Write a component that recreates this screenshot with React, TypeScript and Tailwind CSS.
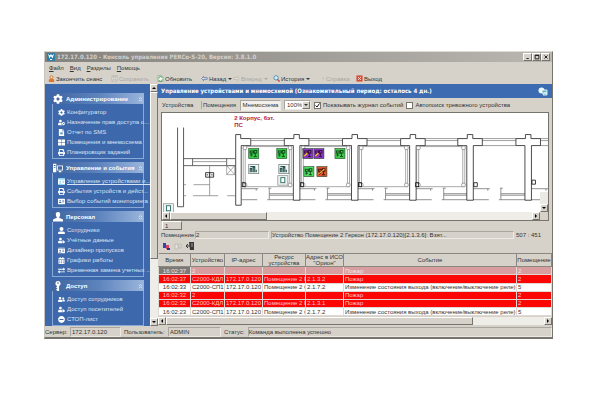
import { useState } from "react";
import type { ReactNode } from "react";
import {
  FaAddressCard,
  FaCalendarAlt,
  FaCog,
  FaExchangeAlt,
  FaFileAlt,
  FaIdCard,
  FaMinusCircle,
  FaPrint,
  FaThLarge,
  FaUserAlt,
  FaUserCog,
  FaUserFriends,
  FaUserTag,
} from "react-icons/fa";

const raised = "border border-t-white border-l-white border-r-[#77746e] border-b-[#77746e] bg-[#d6d2ca]";
const sunken = "border border-t-[#aaa69f] border-l-[#aaa69f] border-r-[#eceae5] border-b-[#eceae5]";

type IconProps = { className?: string };

function ConsoleIcon({ className }: IconProps) {
  return (
    <svg viewBox="0 0 12 12" className={className} fill="currentColor">
      <path fillRule="evenodd" d="M0 1h4v10H0zM1 2.5v1h2v-1zM1 5v1h2V5zM5 3h7v6H5zM6 4v4h5V4zM7 9.5h3v1.5H7z" />
    </svg>
  );
}

function PersonIcon({ className }: IconProps) {
  return (
    <svg viewBox="0 0 12 12" className={className} fill="currentColor">
      <path d="M6 0c2 0 2.8 1.4 2.6 3.2C8.5 4.6 8 5.5 7.4 6v1L12 9v2.5H0V9l4.6-2V6C4 5.5 3.5 4.6 3.4 3.2 3.2 1.4 4 0 6 0z" />
    </svg>
  );
}

function KeyIcon({ className }: IconProps) {
  return (
    <svg viewBox="0 0 12 12" className={className} fill="currentColor">
      <path fillRule="evenodd" d="M6 0a3.2 3.2 0 0 1 1.3 6.1V12H5v-1H4V9.5h1v-1H4V7.3h.7V6.1A3.2 3.2 0 0 1 6 0zM6 1.5a1 1 0 0 0 0 2 1 1 0 0 0 0-2z" />
    </svg>
  );
}

const groups = [
  {
    title: "Администрирование",
    icon: FaCog,
    items: [
      { icon: FaCog, label: "Конфигуратор" },
      { icon: FaUserCog, label: "Назначение прав доступа о..." },
      { icon: FaFileAlt, label: "Отчет по SMS" },
      { icon: FaThLarge, label: "Помещения и мнемосхема" },
      { icon: FaPrint, label: "Планировщик заданий" },
    ],
  },
  {
    title: "Управление и события",
    icon: ConsoleIcon,
    items: [
      { icon: FaIdCard, label: "Управление устройствами и...", active: true },
      { icon: FaPrint, label: "События устройств и дейст..." },
      { icon: FaAddressCard, label: "Выбор событий мониторинга" },
    ],
  },
  {
    title: "Персонал",
    icon: PersonIcon,
    items: [
      { icon: FaUserAlt, label: "Сотрудники" },
      { icon: FaUserTag, label: "Учётные данные" },
      { icon: FaIdCard, label: "Дизайнер пропусков" },
      { icon: FaCalendarAlt, label: "Графики работы" },
      { icon: FaExchangeAlt, label: "Временная замена учетных ..." },
    ],
  },
  {
    title: "Доступ",
    icon: KeyIcon,
    items: [
      { icon: FaUserFriends, label: "Доступ сотрудников" },
      { icon: FaUserTag, label: "Доступ посетителей" },
      { icon: FaMinusCircle, label: "СТОП-лист" },
    ],
  },
];

const rows = [
  { tone: "selected", cells: ["16:02:37", "2", "", "", "", "Пожар", "2"] },
  { tone: "alarm", cells: ["16:02:37", "С2000-КДЛ", "172.17.0.120", "Помещение 2 П", "2.1.3.2", "Пожар", "2"] },
  { tone: "plain", cells: ["16:02:33", "С2000-СП1", "172.17.0.120", "Помещение 2 С", "2.1.7.2", "Изменение состояния выхода (включение/выключение реле)", "5"] },
  { tone: "alarm", cells: ["16:02:32", "2", "", "", "", "Пожар", "2"] },
  { tone: "alarm", cells: ["16:02:32", "С2000-КДЛ", "172.17.0.120", "Помещение 2 П", "2.1.3.1", "Пожар", "2"] },
  { tone: "plain", cells: ["16:02:23", "С2000-СП1", "172.17.0.120", "Помещение 2 С", "2.1.7.2", "Изменение состояния выхода (включение/выключение реле)", "5"] },
];

const tones: Record<string, string> = {
  selected: "bg-[#d79d9f] text-[#f8e4e4]",
  alarm: "bg-[#fb0505] text-[#ffc4c4]",
  plain: "bg-white text-[#333]",
};

function Arrow({ dir }: { dir: "up" | "down" | "left" | "right" }) {
  const d = { up: "M1 4h4L3 2z", down: "M1 2h4L3 4z", left: "M4 1v4L2 3z", right: "M2 1v4l2-2z" }[dir];
  return (
    <svg viewBox="0 0 6 6" className="h-1.5 w-1.5 shrink-0">
      <path d={d} fill="currentColor" />
    </svg>
  );
}

function ScrollButton({ dir, label }: { dir: "up" | "down" | "left" | "right"; label: string }) {
  return (
    <button type="button" aria-label={label} className={`flex h-2 w-2 shrink-0 items-center justify-center text-black ${raised}`}>
      <Arrow dir={dir} />
    </button>
  );
}

function ToolButton({ icon, label, muted, menu }: { icon: ReactNode; label: string; muted?: boolean; menu?: boolean }) {
  return (
    <button type="button" className={`flex items-center gap-px whitespace-nowrap ${muted ? "text-[#aaa69f]" : "text-[#333]"}`}>
      <svg viewBox="0 0 8 8" className="h-[7px] w-[7px] shrink-0">
        {icon}
      </svg>
      {label}
      {menu ? <Arrow dir="down" /> : null}
    </button>
  );
}

function TitleBar() {
  return (
    <header className="flex h-[10px] items-center gap-0.5 bg-linear-to-r from-[#85837f] to-[#bab7b0] px-0.5 text-[#d3d1cc]">
      <svg viewBox="0 0 8 8" className="h-2 w-2">
        <rect width="8" height="8" fill="#2d7fa8" />
        <path d="M1 1l1.5 4.5L4 3l1.5 2.5L7 1 5 2.5 4 1 3 2.5zM3 6h2v1H3z" fill="#fff" />
      </svg>
      <h1 className="grow font-['DejaVu_Sans_Condensed','DejaVu_Sans',sans-serif] font-bold">
        172.17.0.120 - Консоль управления PERCo-S-20, Версия: 3.8.1.0
      </h1>
      <div className="flex">
        {[
          { label: "Свернуть", d: "M2 6h3" },
          { label: "Развернуть", d: "M1.5 1.5h5v5h-5zM1.5 2h5" },
          { label: "Закрыть", d: "M2 2l4 4M6 2L2 6" },
        ].map((b) => (
          <button key={b.label} type="button" aria-label={b.label} className={`h-2 w-[9px] ${raised}`}>
            <svg viewBox="0 0 8 8" className="mx-auto h-1.5 w-1.5">
              <path d={b.d} fill="none" stroke="#222" strokeWidth="1.3" />
            </svg>
          </button>
        ))}
      </div>
    </header>
  );
}

function Toolbar() {
  return (
    <div className="grid h-[11px] grid-cols-[63px_46px_44px_32px_40px_45px_38px_30px] items-center pl-[3px]">
      <ToolButton
        label="Закончить сеанс"
        icon={<><circle cx="4" cy="2.5" r="1.8" fill="#f2dcae" stroke="#c5672c" strokeWidth=".8" /><path d="M1 8V5l3-1 3 1v3z" fill="#df762f" /></>}
      />
      <ToolButton muted label="Сохранить" icon={<path d="M1 1h6v6H1zM2.5 1v2h3V1M2.5 7V5h3v2" fill="#e5e2dd" stroke="#b5b1aa" strokeWidth=".8" />} />
      <ToolButton
        label="Обновить"
        icon={<><path d="M1 .5h4l2 2v5H1z" fill="#f6f8f4" stroke="#7b8b7b" strokeWidth=".6" /><path d="M2 4a2 2 0 0 1 4-.5M6 5a2 2 0 0 1-4 .5" fill="none" stroke="#219d3e" strokeWidth="1" /></>}
      />
      <ToolButton menu label="Назад" icon={<path d="M7 3H3V1.5L.8 4 3 6.5V5h4z" fill="#dfe8f5" stroke="#45618b" strokeWidth=".7" />} />
      <ToolButton muted menu label="Вперед" icon={<path d="M1 3h4V1.5L7.2 4 5 6.5V5H1z" fill="#e5e2dd" stroke="#b5b1aa" strokeWidth=".7" />} />
      <ToolButton
        menu
        label="История"
        icon={<><circle cx="3.5" cy="3.2" r="2.5" fill="#d5edf8" stroke="#4d87a7" /><path d="M5 5l2.5 2.5" stroke="#cb3f34" strokeWidth="1.5" /></>}
      />
      <ToolButton muted label="Справка" icon={<path d="M5 4h2M6 3v2" stroke="#bdb9b2" strokeWidth=".7" />} />
      <ToolButton label="Выход" icon={<><rect x=".5" y=".5" width="7" height="7" fill="#d84b32" /><path d="M2.5 2.5l3 3M5.5 2.5l-3 3" stroke="#fff" /></>} />
    </div>
  );
}

function Sidebar() {
  return (
    <aside className="flex w-[113px] shrink-0 overflow-hidden">
      <nav className="flex grow flex-col gap-[3px] overflow-hidden bg-[#3d68ab] pt-[9px] pr-1.5 pl-[7px] text-[#d7e4f5]">
        {groups.map(({ title, icon: Icon, items }) => (
          <section key={title}>
            <button type="button" className="flex h-[11px] w-full items-center gap-[3px] bg-linear-to-r from-[#41669f] via-[#5d83bd] to-[#9bb6dc] px-px font-bold text-white">
              <Icon className="h-[10px] w-[10px] shrink-0" />
              <span className="grow text-left whitespace-nowrap">{title}</span>
              <svg viewBox="0 0 6 8" className="h-1.5 w-[5px]">
                <path d="M1 4l2-2 2 2M1 7l2-2 2 2" fill="none" stroke="#e7effa" />
              </svg>
            </button>
            <ul className="border border-t-0 border-[#89a9d6] pt-[3px] pb-px pl-[5px]">
              {items.map((item) => (
                <li key={item.label} className="h-[10px]">
                  <a href="#" className="flex h-full items-center gap-0.5 whitespace-nowrap">
                    <item.icon className={`h-[7px] w-[7px] shrink-0 text-white ${"active" in item ? "bg-[#6fc3ea]" : ""}`} />
                    <span className={"active" in item ? "underline" : ""}>{item.label}</span>
                  </a>
                </li>
              ))}
            </ul>
          </section>
        ))}
      </nav>
      <div className="flex w-2 shrink-0 flex-col bg-[#efede8]">
        <ScrollButton dir="up" label="Прокрутить вверх" />
        <div className={`h-[167px] ${raised}`} />
        <div className="grow" />
        <ScrollButton dir="down" label="Прокрутить вниз" />
      </div>
    </aside>
  );
}

function Device({ x, y, fill, ink }: { x: number; y: number; fill: string; ink: string }) {
  return (
    <g transform={`translate(${x} ${y})`}>
      <rect x=".5" y=".5" width="10" height="10" fill={fill} stroke="#27452c" strokeWidth=".6" />
      <path d="M2 3h3v2H2zM6 2.5h2.5V5H6zM3 5v3.5M7 5v3M5.5 8.5h3M2 7h2.5M5 4l2 2" fill="none" stroke={ink} strokeWidth="1" />
    </g>
  );
}

function Sensor({ x, y }: { x: number; y: number }) {
  return (
    <g transform={`translate(${x} ${y})`}>
      <rect x=".5" y=".5" width="10" height="9" fill="#f4f8f6" stroke="#6b7a77" strokeWidth=".7" />
      <path d="M2 8V4.5h1.5V8M5 8V3.5h1.5V8M8 8V5.5M2 2.5h5" fill="none" stroke="#28544f" strokeWidth="1.1" />
    </g>
  );
}

function Panel({ x, y }: { x: number; y: number }) {
  return (
    <g transform={`translate(${x} ${y})`}>
      <rect x=".5" y=".5" width="10" height="9.5" fill="#eef1f0" stroke="#858f8d" strokeWidth=".7" />
      <rect x="3.5" y="2.5" width="4" height="5" fill="#fff" stroke="#286b62" strokeWidth=".9" />
    </g>
  );
}

// Columns between the rooms, by centre line
const columns = [296, 354, 412, 469, 527];
const rooms = [243, 301, 359, 416];

function FloorPlan() {
  return (
    <svg viewBox="162 113 385 99" className="block w-full bg-white" fill="none" stroke="#555" strokeWidth=".8">
      <path d="M177.5 127.5v79h6v-79" stroke="#333" />
      <path d="M183.5 158.5H235M183.5 165.5H235M192.5 158.5v7M226.5 158.5v7" stroke="#444" />
      <path d="M192.5 161.5h34M209.5 165.5v30M193.5 184.5h16M184 184.5h2M184 195.5h2M193 195.5h25M227 195.5h8" stroke="#888" />
      <path d="M226.5 165.5h8v9h-8zM226.5 165.5l8 9M234.5 165.5l-8 9" stroke="#777" strokeWidth=".6" />
      <path d="M205.5 172.5h8v4.5h-8zM209.5 172.5v4.5M206.5 174.7h1.5M211 174.7h1.5" stroke="#111" />
      <path d="M235.5 205V134.5h5v4h10v7h-9.5V205z" stroke="#222" fill="#fff" />
      {[238, ...columns].map((c) => (
        <g key={c}>
          <path d={`M${c + 12} 138.5h34M${c + 12} 140.5h34M${c + 12} 145.5h34`} stroke="#777" strokeWidth=".7" />
          <path
            d={`M${c + 3} 188.5h17M${c + 18} 188.5v2M${c + 3} 199.5h16M${c + 30} 188h3M${c + 31} 188v11.5M${c + 31} 193.5h24M${c + 31} 195h24M${c + 29} 199.5h26`}
            stroke="#777"
          />
        </g>
      ))}
      {columns.map((c) => (
        <path key={c} d={`M${c - 3} 200V145.5h-9v-7h9.5v-4h5.5v4h9.5v7h-9V200z`} fill="#fff" stroke="#222" />
      ))}
      {rooms.map((x) => (
        <g key={x} stroke="#888">
          <path d={`M${x} 146.5h48v40h-48zM${x + 2} 148v37M${x + 46} 148v37`} strokeWidth=".7" />
          {[0, 45].map((dx) =>
            [146, 183].map((y) => <rect key={`${dx}-${y}`} x={x + dx} y={y} width="3.5" height="3.5" rx="1" fill="#fff" />)
          )}
          <rect x={x - 1} y="182.5" width="3" height="4" stroke="#111" />
        </g>
      ))}
      <path d="M473 182.5h3.5v4H473zM531 180h3.5v4H531z" stroke="#111" />
      <Device x={248} y={148} fill="#35cf45" ink="#14501d" />
      <Device x={276} y={148} fill="#35cf45" ink="#14501d" />
      <Sensor x={248} y={164} />
      <Sensor x={278} y={164} />
      <Panel x={277} y={175} />
      <Panel x={163} y={203} />
      <Device x={302} y={148} fill="#8a35c9" ink="#3a1238" />
      <Device x={313} y={148} fill="#8a35c9" ink="#3a1238" />
      <path d="M304 156l3-3M315 156l3-3" stroke="#efb13d" strokeWidth="1.5" />
      <Device x={334} y={148} fill="#3fcb4e" ink="#14501d" />
      <Device x={303} y={166} fill="#4fdc61" ink="#14501d" />
      <Device x={316} y={166} fill="#e2552c" ink="#4c1a10" />
      <path d="M318 174l6-5" stroke="#e6c23d" strokeWidth="1" />
      <g fill="#b3243d" stroke="none" fontSize="6" fontWeight="bold">
        <text x="234" y="120">2 Корпус, 6эт.</text>
        <text x="234" y="127">ПС</text>
      </g>
    </svg>
  );
}

function ViewTabs() {
  const [journal, setJournal] = useState(true);
  const [search, setSearch] = useState(false);
  const box = "flex h-[7px] w-[7px] shrink-0 appearance-none border border-[#77746e] bg-white";

  return (
    <div className="flex h-[14px] shrink-0 items-center gap-[3px] pl-1 whitespace-nowrap">
      <button type="button" className="w-9 text-left">Устройства</button>
      <button type="button" className="w-9 border-l border-[#aaa69f] text-center">Помещения</button>
      <button type="button" className={`h-[11px] w-[41px] bg-[#f2f0ec] ${sunken}`}>Мнемосхема</button>
      <div className="relative">
        <select aria-label="Масштаб" defaultValue="100%" className={`block h-[10px] w-[27px] appearance-none bg-white pl-0.5 leading-2 ${sunken}`}>
          <option>100%</option>
          <option>200%</option>
        </select>
        <span className={`pointer-events-none absolute top-px right-px flex h-2 w-2 items-center justify-center ${raised}`}>
          <Arrow dir="down" />
        </span>
      </div>
      <label className="relative flex items-center gap-0.5">
        <input type="checkbox" checked={journal} onChange={(e) => setJournal(e.target.checked)} className={box} />
        {journal ? (
          <svg viewBox="0 0 7 7" className="pointer-events-none absolute left-0 h-[7px] w-[7px]">
            <path d="M1.5 3.5L3 5l2.5-3.5" fill="none" stroke="#111" />
          </svg>
        ) : null}
        Показывать журнал событий
      </label>
      <label className="flex items-center gap-0.5">
        <input type="checkbox" checked={search} onChange={(e) => setSearch(e.target.checked)} className={box} />
        Автопоиск тревожного устройства
      </label>
    </div>
  );
}

function MapView() {
  return (
    <div className="mx-[3px] shrink-0 border border-[#77746e] bg-[#efede8]">
      <div className="relative">
        <FloorPlan />
        <div className="absolute right-0 bottom-0 flex h-5 w-2 flex-col justify-end bg-[#eceae4]">
          <ScrollButton dir="down" label="Вниз по плану" />
        </div>
      </div>
      <div className="flex h-2">
        <ScrollButton dir="left" label="Влево по плану" />
        <div className={`w-1/4 ${raised}`} />
        <div className="grow" />
        <ScrollButton dir="right" label="Вправо по плану" />
        <div className="w-2 bg-[#d6d2ca]" />
      </div>
    </div>
  );
}

function EventLog() {
  const th = "overflow-hidden border-r border-b border-[#8b8882] p-0 text-center font-normal";
  return (
    <div className="flex grow flex-col">
      <div className="flex h-[14px] shrink-0 items-center gap-1 pl-1">
        <button type="button" aria-label="Фильтр">
          <svg viewBox="0 0 8 8" className="block h-2 w-2"><path d="M1 1h3v5H1z" fill="#3146b5" /><path d="M4 3h3v4H4z" fill="#d84360" /><path d="M5 6h3v2H5z" fill="#2b357d" /></svg>
        </button>
        <button type="button" aria-label="Копировать">
          <svg viewBox="0 0 8 8" className="block h-2 w-2"><path d="M1 2h3v5H1zM5 2h2v4H5z" fill="#e5e2dd" stroke="#b5b1aa" strokeWidth=".7" /></svg>
        </button>
        <button type="button" aria-label="Закрыть журнал">
          <svg viewBox="0 0 8 8" className="block h-2 w-2"><path d="M3 0h5v8H4z" fill="#3b3937" /><path d="M0 4h5M2 2L0 4l2 2" fill="none" stroke="#3b3937" /><path d="M5 2h2M5 4h2" stroke="#ccc" strokeWidth=".7" /></svg>
        </button>
      </div>
      <table className="h-[63px] w-full table-fixed border-collapse border-t border-[#8b8882] leading-[6px] text-[#333]">
        <colgroup>
          <col className="w-[32px]" />
          <col className="w-[34px]" />
          <col className="w-[38px]" />
          <col className="w-[43px]" />
          <col className="w-[38px]" />
          <col />
          <col className="w-[35px]" />
        </colgroup>
        <thead className="whitespace-nowrap">
          <tr className="h-[13px]">
            <th className={th}>Время</th>
            <th className={th}>Устройство</th>
            <th className={th}>IP-адрес</th>
            <th className={th}>Ресурс<br />устройства</th>
            <th className={th}>Адрес в ИСО<br />"Орион"</th>
            <th className={th}>Событие</th>
            <th className={th}>Помещение</th>
          </tr>
        </thead>
        <tbody className="whitespace-nowrap">
          {rows.map((row, i) => (
            <tr key={i} className={tones[row.tone]}>
              {row.cells.map((cell, j) => (
                <td
                  key={j}
                  className={`overflow-hidden border border-[#e4dcd8]/60 p-0 ${j === 0 ? "text-center" : "pl-px"} ${i === 0 && j === 0 ? "bg-[#7c7a77]" : ""}`}
                >
                  {cell}
                </td>
              ))}
            </tr>
          ))}
        </tbody>
      </table>
      <div className="mt-auto flex h-2 bg-[#efede8]">
        <ScrollButton dir="left" label="Журнал влево" />
        <div className={`w-[78%] ${raised}`} />
        <div className="grow" />
        <ScrollButton dir="right" label="Журнал вправо" />
      </div>
    </div>
  );
}

export default function App() {
  return (
    <div className="min-h-screen bg-white pt-[51px] pr-[47px] pl-[44px] font-['Liberation_Sans',Arial,sans-serif] text-[6px] leading-2 text-[#333]">
      <div className="border border-t-[#dedbd5] border-r-[#77746e] border-b-2 border-b-[#77746e] border-l-[#c8c5be] bg-[#d6d2ca]">
        <TitleBar />
        <nav className="flex h-[11px] items-center gap-1.5 pl-1">
          {["Файл", "Вид", "Разделы", "Помощь"].map((m) => (
            <button key={m} type="button" className="first-letter:underline">{m}</button>
          ))}
        </nav>
        <Toolbar />
        <div className="flex">
          <Sidebar />
          <main className="flex h-[241px] min-w-0 grow flex-col">
            <div className="flex h-[14px] shrink-0 items-center justify-between bg-[#3d6bb1] pr-1 pl-[3px] font-['DejaVu_Sans_Condensed','DejaVu_Sans',sans-serif] font-bold text-white">
              <h2>Управление устройствами и мнемосхемой (Ознакомительный период: осталось 4 дн.)</h2>
              <svg viewBox="0 0 10 9" className="h-[9px] w-[10px]">
                <circle cx="3.5" cy="3.5" r="3" fill="#e9f6fa" />
                <path d="M4 3h5v3H4zM6 6h3v2H5z" fill="#58b9c9" stroke="#fff" strokeWidth=".8" />
              </svg>
            </div>
            <ViewTabs />
            <MapView />
            <div className="flex h-[10px] shrink-0 pb-px">
              <button type="button" className={`ml-1 w-5 pl-0.5 text-left leading-[6px] ${raised}`}>1</button>
            </div>
            <div className="flex h-2 shrink-0 items-center gap-0.5 pr-1 pl-[3px] leading-[6px] whitespace-nowrap">
              <span className="w-8">Помещение</span>
              <span className={`w-[74px] ${sunken}`}>2</span>
              <span className={`grow ${sunken}`}>Устройство Помещение 2 Геркон (172.17.0.120)[2.1.3.6]: Взят...</span>
              <span className="w-8">507 : 451</span>
            </div>
            <EventLog />
          </main>
        </div>
        <footer className="flex h-[11px] items-center gap-[3px] whitespace-nowrap">
          <span className="w-[22px]">Сервер:</span>
          <span className={`w-[51px] pl-px ${sunken}`}>172.17.0.120</span>
          <span className="w-[41px]">Пользователь:</span>
          <span className={`w-[53px] pl-px ${sunken}`}>ADMIN</span>
          <span>Статус:</span>
          <span className={`grow ${sunken}`}>Команда выполнена успешно</span>
        </footer>
      </div>
    </div>
  );
}
